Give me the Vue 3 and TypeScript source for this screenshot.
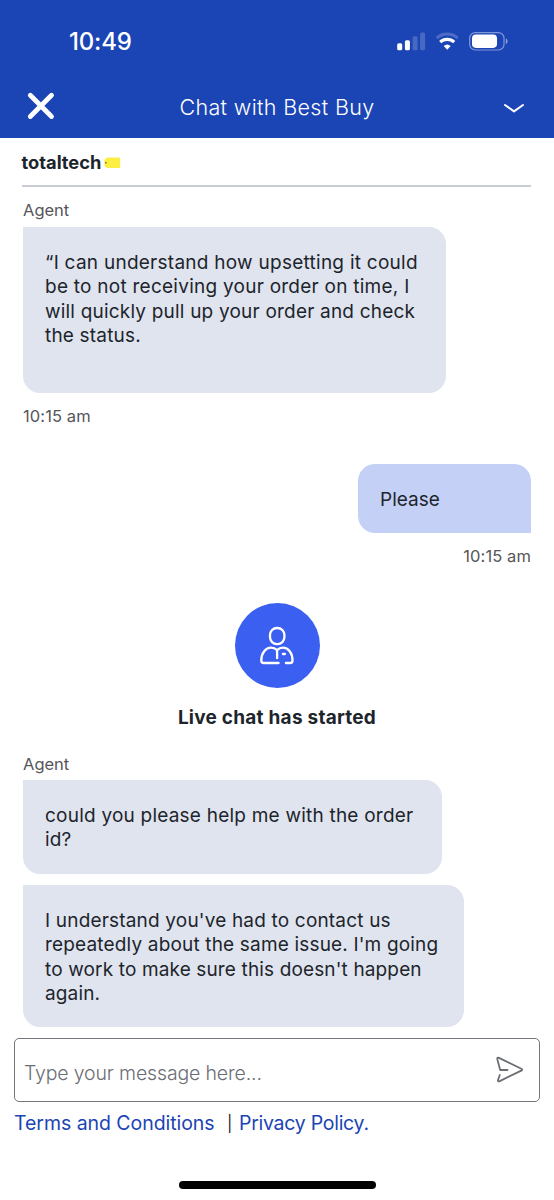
<script setup lang="ts">
interface Line {
  text: string
  tracking: number
}

interface Bubble {
  id: string
  lines: Line[]
}

const firstReply: Bubble = {
  id: 'upset',
  lines: [
    { text: '“I can understand how upsetting it could', tracking: 0.26 },
    { text: 'be to not receiving your order on time, I', tracking: 0.25 },
    { text: 'will quickly pull up your order and check', tracking: 0.2 },
    { text: 'the status.', tracking: 0.18 },
  ],
}

const liveReplies: Bubble[] = [
  {
    id: 'order-id',
    lines: [
      { text: 'could you please help me with the order', tracking: 0.22 },
      { text: 'id?', tracking: 0.1 },
    ],
  },
  {
    id: 'repeat',
    lines: [
      { text: "I understand you've had to contact us", tracking: 0.18 },
      { text: "repeatedly about the same issue. I'm going", tracking: 0.17 },
      { text: "to work to make sure this doesn't happen", tracking: 0.14 },
      { text: 'again.', tracking: 0.15 },
    ],
  },
]
</script>

<template>
  <div class="screen">
    <header class="header">
      <div class="status">
        <span class="clock">10:49</span>
        <svg class="indicators" width="112" height="20" viewBox="0 0 112 20">
          <g fill="#fff">
            <rect x="0.2" y="11.3" width="5" height="6.9" rx="1.5" />
            <rect x="7.9" y="8.2" width="5" height="10" rx="1.5" />
            <rect x="15.6" y="4.2" width="5" height="14" rx="1.5" opacity=".2" />
            <rect x="23.1" y="0.5" width="5" height="17.7" rx="1.5" opacity=".2" />
          </g>
          <path d="M39.7 6.2a15.5 15.5 0 0 1 21 0" fill="none" stroke="#fff" stroke-width="3" opacity=".22" />
          <path d="M43.2 10.2a10.2 10.2 0 0 1 14 0" fill="none" stroke="#fff" stroke-width="3.1" />
          <path d="M46.7 14a5.2 5.2 0 0 1 7 0l-3.5 3.8z" fill="#fff" />
          <rect x="72.700" y="0.6" width="34.3" height="17.4" rx="5.6" fill="none" stroke="#fff" stroke-width="1.2" opacity=".45" />
          <rect x="75" y="2.6" width="25" height="13.3" rx="3.8" fill="#fff" />
          <path d="M108.800 6.2q1.8.8 1.8 3t-1.8 3z" fill="#fff" opacity=".5" />
        </svg>
      </div>
      <div class="titlebar">
        <svg class="close" width="30" height="30" viewBox="0 0 30 30">
          <path d="M4.3 4.3l21.2 21.2M25.5 4.3L4.3 25.5" stroke="#fff" stroke-width="4.800" stroke-linecap="round" />
        </svg>
        <h1 class="title"><span>Chat with Best Buy</span></h1>
        <svg class="chevron" width="22" height="12" viewBox="0 0 22 12">
          <path d="M2 3l9 6.400 9-6.400" fill="none" stroke="#fff" stroke-width="2" stroke-linecap="round" stroke-linejoin="round" />
        </svg>
      </div>
    </header>

    <main class="chat">
      <div class="brand">
        <span class="brand-name">totaltech</span>
        <svg width="17" height="12" viewBox="0 0 17 12">
          <path d="M3 .5h11.700q1.500 0 1.500 1.500v7.500q0 1.500-1.500 1.500H3L.4 8.500V3z" fill="#fdee42" />
          <circle cx="1.900" cy="5.700" r=".7" fill="#3b3a22" />
        </svg>
      </div>

      <div class="sender">Agent</div>
      <div class="bubble first">
        <span v-for="line in firstReply.lines" :key="line.text" class="line" :style="{ letterSpacing: line.tracking + 'px' }">{{ line.text }}</span>
      </div>
      <div class="time">10:15 am</div>

      <div class="bubble mine"><span class="line">Please</span></div>
      <div class="time right">10:15 am</div>

      <section class="started">
        <div class="avatar">
          <svg width="86" height="86" viewBox="0 0 86 86" fill="none" stroke="#fff" stroke-width="2.300" stroke-linecap="round" stroke-linejoin="round">
            <rect x="35" y="25" width="14.400" height="16.200" rx="7" />
            <path d="M43.600 60H28.700q-2.400 0-2.400-2.600c0-7.500 4.400-12.700 9.800-12.700 2.300 0 4.200.8 6 2.500 1.800-1.700 3.500-2.500 5.800-2.500 5.400 0 9.600 5.200 9.600 12.700q0 2.600-2.400 2.600h-4.200M42.100 47.200v8M47.900 51h2" />
          </svg>
        </div>
        <h2><span>Live chat has started</span></h2>
      </section>

      <div class="sender second">Agent</div>
      <div v-for="bubble in liveReplies" :key="bubble.id" class="bubble" :class="bubble.id">
        <span v-for="line in bubble.lines" :key="line.text" class="line" :style="{ letterSpacing: line.tracking + 'px' }">{{ line.text }}</span>
      </div>
    </main>

    <footer class="footer">
      <div class="composer">
        <span class="placeholder">Type your message here...</span>
        <svg width="30" height="30" viewBox="0 0 30 30" fill="none" stroke="#6b6e75" stroke-width="1.800" stroke-linecap="round" stroke-linejoin="round">
          <path d="M12.500 15H5.200L2.300 4.200Q2 2 4 2.900L26.300 13.700q1.900.9 0 1.900L4.800 26.100q-2.300.9-1.800-1.100L4.800 20" />
        </svg>
      </div>
      <div class="links">
        <a class="terms">Terms and Conditions</a>
        <span class="bar">|</span>
        <a class="privacy">Privacy Policy.</a>
      </div>
      <div class="home"></div>
    </footer>
  </div>
</template>

<style>
body {
  margin: 0;
  background: #fff;
}
</style>

<style scoped>
.screen {
  width: 554px;
  height: 1200px;
  overflow: hidden;
  display: flex;
  flex-direction: column;
  background: #fff;
  color: #1d252c;
  font-family: Inter, "Liberation Sans", sans-serif;
  box-sizing: border-box;
}

.screen * {
  box-sizing: border-box;
}

.header {
  height: 137.500px;
  flex: none;
  background: #1b44b5;
  color: #fff;
}

.status {
  height: 76px;
  padding: 27px 45px 0 69px;
  display: flex;
  justify-content: space-between;
}

.clock {
  font-size: 24px;
  line-height: 30px;
  font-weight: 550;
  letter-spacing: -0.200px;
}

.indicators {
  margin-top: 5px;
}

.titlebar {
  height: 61px;
  padding: 0 29px 0 26px;
  display: flex;
  align-items: center;
}

.close {
  width: 30px;
  margin-top: -1px;
}

.title {
  flex: 1;
  margin: 0;
  padding: 1px 5px 0 0;
  text-align: center;
  font-size: 21.500px;
  line-height: 28px;
  font-weight: 330;
  letter-spacing: 0.350px;
  white-space: nowrap;
}

.chevron {
  margin-top: 2px;
}

.chat {
  height: 900.500px;
  flex: none;
  padding: 0 23px;
  display: flex;
  flex-direction: column;
}

.brand {
  height: 49.500px;
  flex: none;
  display: flex;
  align-items: flex-start;
  gap: 3px;
  padding-top: 12px;
  margin-left: -1.500px;
  border-bottom: 2px solid #c8ccd5;
}

.brand-name {
  font-size: 18.300px;
  line-height: 24px;
  font-weight: 700;
}

.brand svg {
  margin-top: 7.500px;
}

.sender {
  flex: none;
  height: 40px;
  padding-top: 13px;
  font-size: 16.500px;
  line-height: 20px;
  color: #55555a;
}

.bubble {
  flex: none;
  display: flex;
  flex-direction: column;
  align-items: flex-start;
  padding: 24px 22px 0;
  background: #e0e4ee;
  border-radius: 0 17px 17px 17px;
  font-size: 19px;
  line-height: 24.250px;
}

.line {
  white-space: nowrap;
}

.first {
  width: 423px;
  height: 165.500px;
}

.time {
  flex: none;
  height: 71px;
  padding-top: 13px;
  font-size: 16.500px;
  line-height: 20px;
  color: #55555a;
  letter-spacing: 0.100px;
}

.mine {
  width: 173px;
  height: 69px;
  align-self: flex-end;
  background: #c5d0f7;
  border-radius: 17px 17px 0 17px;
}

.right {
  align-self: flex-end;
  height: 70.500px;
}

.started {
  flex: none;
  height: 147px;
  display: flex;
  flex-direction: column;
  align-items: center;
}

.avatar {
  width: 85px;
  height: 85px;
  border-radius: 50%;
  background: #3b5ff0;
}

.started h2 {
  margin: 18px 0 0;
  font-size: 19px;
  line-height: 24px;
  font-weight: 700;
  letter-spacing: 0.240px;
}

.second {
  height: 30px;
  padding-top: 4px;
}

.order-id {
  width: 419px;
  height: 93.500px;
  margin-bottom: 11.500px;
}

.repeat {
  width: 441px;
  height: 141.500px;
}

.footer {
  flex: 1;
  padding: 0 14px;
}

.composer {
  height: 63.500px;
  border: 1.500px solid #74777e;
  border-radius: 5px;
  padding: 0 14px 0 9px;
  display: flex;
  align-items: center;
  justify-content: space-between;
}

.placeholder {
  padding-top: 7px;
  font-size: 19.500px;
  line-height: 26px;
  font-weight: 350;
  letter-spacing: -0.150px;
  color: #6b6e74;
}

.links {
  height: 79.500px;
  padding-top: 9px;
  display: flex;
  font-size: 19.500px;
  line-height: 25px;
  white-space: nowrap;
}

.links a {
  color: #1b44b5;
}

.terms {
  width: 213px;
  letter-spacing: -0.050px;
}

.bar {
  width: 12px;
  font-size: 16px;
  line-height: 24px;
}

.privacy {
  letter-spacing: -0.270px;
}

.home {
  width: 197px;
  height: 8px;
  margin-left: 165px;
  border-radius: 4px;
  background: #000;
}
</style>
